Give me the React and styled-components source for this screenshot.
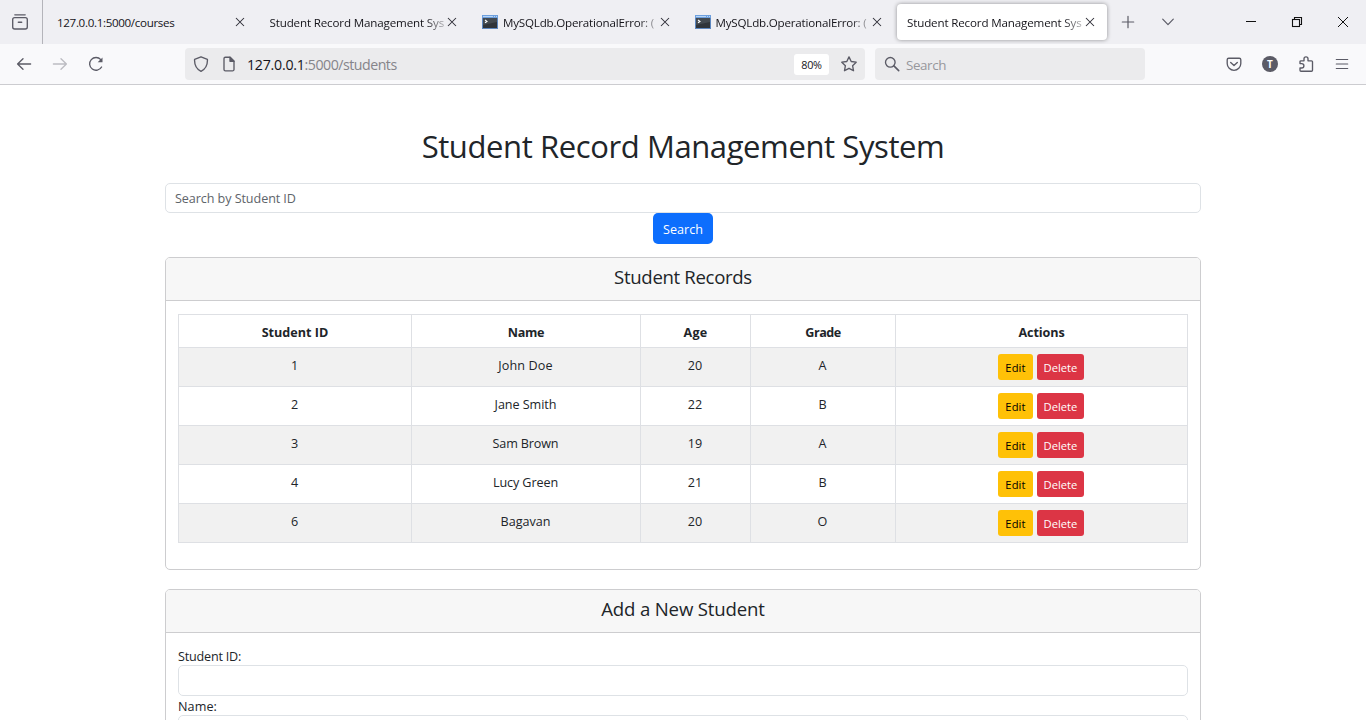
import React from "react";
import styled, { createGlobalStyle } from "styled-components";

const GlobalStyle = createGlobalStyle`
  *, *::before, *::after { box-sizing: border-box; }
  html, body { margin: 0; padding: 0; background: #fff; overflow: hidden; }
  body { font-family: "Open Sans", "Noto Sans", sans-serif; color: #212529; font-size: 12.6px; }
  button, input { font-family: inherit; }
`;

const Window = styled.div`
  width: 1366px;
  height: 720px;
  overflow: hidden;
  display: flex;
  flex-direction: column;
`;

/* ---------- browser chrome ---------- */

const TabStrip = styled.div`
  height: 44px;
  flex: none;
  display: flex;
  align-items: stretch;
  background: #efeff3;
  color: #15141a;
`;

const ViewButton = styled.div`
  width: 43px;
  padding-right: 2px;
  border-right: 1px solid #b4b4ba;
  margin-right: 4px;
  display: flex;
  align-items: center;
  justify-content: center;
`;

const TabList = styled.div`
  display: flex;
  align-items: center;
  gap: 3px;
`;

const TabBox = styled.div`
  width: 209.5px;
  height: 36px;
  padding: 0 12px 0 10px;
  display: flex;
  align-items: center;
  border-radius: 4px;
  background: ${(p) => (p.$active ? "#fff" : "transparent")};
  box-shadow: ${(p) => (p.$active ? "0 0 4px rgba(0,0,0,0.4)" : "none")};
`;

const Favicon = styled.svg`
  flex: none;
  margin-right: 5px;
`;

const TabTitle = styled.span`
  flex: 1;
  min-width: 0;
  padding-top: 1px;
  overflow: hidden;
  white-space: nowrap;
  font-size: 11.6px;
  line-height: 18px;
  letter-spacing: ${(p) => p.$spacing}px;
  ${(p) => p.$fade && "mask-image: linear-gradient(to right, #000 calc(100% - 20px), transparent 104%);"}
`;

const TabClose = styled.svg`
  flex: none;
  margin-left: 2px;
`;

const StripActions = styled.div`
  display: flex;
  align-items: center;
  margin-left: 13px;
  gap: 24px;
`;

const WindowControls = styled.div`
  display: flex;
  align-items: center;
  margin-left: auto;
  padding-right: 15px;
  gap: 30px;
`;

const Toolbar = styled.div`
  height: 41px;
  flex: none;
  display: flex;
  align-items: center;
  background: #f9f9fb;
  border-bottom: 1px solid #ccccd0;
`;

const NavButtons = styled.div`
  width: 185px;
  padding-left: 16px;
  display: flex;
  gap: 20px;
`;

const Field = styled.div`
  width: ${(p) => p.$width}px;
  height: 32px;
  display: flex;
  align-items: center;
  padding: 0 8px;
  margin-right: 10px;
  border-radius: 4px;
  background: #ebebed;
`;

const PageInfo = styled.svg`
  margin-left: 14px;
`;

const UrlText = styled.span`
  margin-left: 12px;
  padding-top: 2px;
  font-size: 14.2px;
  line-height: 20px;
  letter-spacing: -0.5px;
  color: #85848a;
`;

const Host = styled.span`
  color: #15141a;
  letter-spacing: -0.25px;
`;

const Zoom = styled.span`
  width: 35px;
  height: 21px;
  margin-left: auto;
  margin-right: 12px;
  border-radius: 3px;
  background: #fff;
  color: #15141a;
  font-size: 10.8px;
  line-height: 22px;
  letter-spacing: -0.3px;
  text-align: center;
`;

const SearchHint = styled.span`
  margin-left: 5px;
  padding-top: 2px;
  font-size: 13.4px;
  letter-spacing: -0.4px;
  line-height: 20px;
  color: #97979c;
`;

const ToolbarActions = styled.div`
  display: flex;
  margin-left: auto;
  padding-right: 16px;
  gap: 20px;
`;

/* ---------- page ---------- */

const Page = styled.main`
  width: 1036px;
  margin: 0 auto;
  padding-top: 40px;
  flex: none;
  display: flex;
  flex-direction: column;
`;

const Heading = styled.h1`
  margin: 0 0 16px;
  height: 42px;
  font-size: 31px;
  font-weight: 400;
  line-height: 42px;
  letter-spacing: -0.4px;
  text-align: center;
`;

const TextInput = styled.input`
  display: block;
  width: 100%;
  height: ${(p) => p.$height || 31}px;
  padding: 0 9px;
  border: 1px solid #dee2e6;
  border-radius: 5px;
  background: #fff;
  color: #212529;
  font-size: 12.6px;
  letter-spacing: -0.08px;
  outline: none;
  &::placeholder { color: #5e646a; opacity: 1; }
`;

const SearchButton = styled.button`
  align-self: center;
  width: 60px;
  height: 31px;
  padding: 2px 0 0;
  margin-bottom: 13px;
  border: 0;
  border-radius: 5px;
  background: #0d6efd;
  color: #fff;
  font-size: 12.6px;
  line-height: 19px;
`;

const Card = styled.section`
  border: 1px solid #cdcdcf;
  border-radius: 5px;
  margin-bottom: 19px;
  overflow: hidden;
`;

const CardHeader = styled.header`
  height: 43px;
  padding-top: 7px;
  border-bottom: 1px solid #cdcdcf;
  background: #f7f7f7;
`;

const CardTitle = styled.h2`
  margin: 0;
  font-size: 18.6px;
  font-weight: 400;
  line-height: 24px;
  letter-spacing: ${(p) => p.$spacing}px;
  text-align: center;
`;

const CardBody = styled.div`
  padding: ${(p) => p.$pad};
`;

const Table = styled.table`
  width: 1010px;
  table-layout: fixed;
  border-collapse: separate;
  border-spacing: 0;
  border: 0 solid #dee0e4;
  border-width: 1px 0 0 1px;
  text-align: center;
  line-height: 19px;
`;

const HeadCell = styled.th`
  width: ${(p) => p.$width}px;
  height: 33px;
  padding: 8px 0 0;
  vertical-align: top;
  font-weight: 700;
  letter-spacing: ${(p) => p.$spacing}px;
  border: 0 solid #dee0e4;
  border-width: 0 1px 1px 0;
`;

const Row = styled.tr`
  background: ${(p) => (p.$striped ? "#f1f1f1" : "#fff")};
`;

const Cell = styled.td`
  height: 39px;
  padding: 8px 1px 0 0;
  vertical-align: top;
  letter-spacing: ${(p) => p.$spacing || 0}px;
  border: 0 solid #dee0e4;
  border-width: 0 1px 1px 0;
`;

const ActionCell = styled(Cell)`
  padding-top: 6px;
`;

const Actions = styled.div`
  display: flex;
  justify-content: center;
  gap: 4px;
`;

const ActionButton = styled.button`
  width: ${(p) => (p.$danger ? 47 : 35)}px;
  height: 26px;
  padding: 1px 0 0;
  border: 0;
  border-radius: 3px;
  background: ${(p) => (p.$danger ? "#dc3545" : "#ffc107")};
  color: ${(p) => (p.$danger ? "#fff" : "#000")};
  font-size: 11.2px;
  line-height: 16px;
  letter-spacing: ${(p) => (p.$danger ? 0 : 0.1)}px;
`;

const Label = styled.label`
  display: block;
  height: ${(p) => p.$height}px;
  line-height: ${(p) => p.$line}px;
  letter-spacing: ${(p) => p.$spacing}px;
`;

/* ---------- icons ---------- */

const icon = {
  width: 16,
  height: 16,
  viewBox: "0 0 16 16",
  fill: "none",
  stroke: "#5b5b66",
  strokeWidth: 1.35,
  strokeLinecap: "round",
  strokeLinejoin: "round",
};

const TerminalIcon = () => (
  <Favicon width="16" height="14" viewBox="0 0 16 14">
    <rect width="16" height="14" fill="#5d87bf" />
    <rect x="0" y="0" width="16" height="3" fill="#6d9fdd" />
    <path d="M1 1.5h10M12 1.5h1M14 1.5h1" stroke="#b9d6f6" strokeWidth="1" />
    <rect x="1" y="3" width="14" height="10" fill="#30353a" />
    <path d="M1 3h14v4L1 10z" fill="#434a50" />
    <path d="M3 5l2 1.4L3 7.8" fill="none" stroke="#fff" strokeWidth="1.1" />
  </Favicon>
);

const CloseIcon = () => (
  <TabClose width="10" height="10" viewBox="0 0 10 10" fill="none" stroke="#2b2a33" strokeWidth="1.05">
    <path d="M1 1l8 8M9 1l-8 8" />
  </TabClose>
);

const TABS = [
  { title: "127.0.0.1:5000/courses", spacing: -0.33 },
  { title: "Student Record Management Sys", spacing: -0.15, fade: true },
  { title: "MySQLdb.OperationalError: (", spacing: -0.2, fade: true, terminal: true },
  { title: "MySQLdb.OperationalError: (", spacing: -0.2, fade: true, terminal: true },
  { title: "Student Record Management Sys", spacing: -0.15, fade: true, active: true },
];

const COLUMNS = [
  { label: "Student ID", width: 233, spacing: 0 },
  { label: "Name", width: 229, spacing: -0.3 },
  { label: "Age", width: 110, spacing: 0.2 },
  { label: "Grade", width: 145, spacing: -0.5 },
  { label: "Actions", width: 292, spacing: -0.1 },
];

const STUDENTS = [
  { id: 1, name: "John Doe", age: 20, grade: "A", spacing: 0.1 },
  { id: 2, name: "Jane Smith", age: 22, grade: "B", spacing: -0.05 },
  { id: 3, name: "Sam Brown", age: 19, grade: "A", spacing: -0.15 },
  { id: 4, name: "Lucy Green", age: 21, grade: "B", spacing: -0.1 },
  { id: 6, name: "Bagavan", age: 20, grade: "O", spacing: 0 },
];

function Tabs() {
  return (
    <TabStrip>
      <ViewButton>
        <svg {...icon}>
          <path d="M2.8 .8h10.4" />
          <rect x=".7" y="3.6" width="14.6" height="11.4" rx="2" />
          <path d="M6.3 8.2h3.4" />
        </svg>
      </ViewButton>
      <TabList>
        {TABS.map((t, i) => (
          <TabBox key={i} $active={t.active}>
            {t.terminal && <TerminalIcon />}
            <TabTitle $spacing={t.spacing} $fade={t.fade}>{t.title}</TabTitle>
            <CloseIcon />
          </TabBox>
        ))}
      </TabList>
      <StripActions>
        <svg {...icon} strokeWidth="1.2"><path d="M8 2.3v11.4M2.3 8h11.4" /></svg>
        <svg {...icon} strokeWidth="1.2"><path d="M2.7 5.2L8 10.6l5.3-5.4" /></svg>
      </StripActions>
      <WindowControls>
        <svg width="16" height="16" viewBox="0 0 16 16" stroke="#111"><path d="M3 7.5h10" /></svg>
        <svg width="16" height="16" viewBox="0 0 16 16" fill="none" stroke="#111" strokeWidth="1.1">
          <rect x="3.5" y="5.5" width="7" height="7" />
          <path d="M5.500 5.500v-2h7v7h-2" />
        </svg>
        <svg width="16" height="16" viewBox="0 0 16 16" stroke="#111"><path d="M3 3l10 10M13 3L3 13" /></svg>
      </WindowControls>
    </TabStrip>
  );
}

function NavBar() {
  return (
    <Toolbar>
      <NavButtons>
        <svg {...icon}><path d="M14.6 8H1.6M7 2.7L1.6 8 7 13.3" /></svg>
        <svg {...icon} stroke="#bcbcc2"><path d="M1.4 8h13M9 2.7L14.4 8 9 13.3" /></svg>
        <svg {...icon}>
          <path d="M13.6 11A6.4 6.4 0 1 1 12.8 3.6" />
          <path d="M14.5 1.4v4.8H9.7z" fill="#5b5b66" stroke="none" />
        </svg>
      </NavButtons>
      <Field $width={680}>
        <svg {...icon}><path d="M8 .8l6.4 2.5c.3 5-1.8 9.6-6.4 12C3.4 12.9 1.3 8.3 1.6 3.3z" /></svg>
        <PageInfo {...icon} width="12" viewBox="0 0 12 16">
          <path d="M1 2.6A1.4 1.4 0 0 1 2.400 1.200H7l4 4v8.200a1.400 1.400 0 0 1-1.400 1.400H2.400A1.400 1.400 0 0 1 1 13.400z" />
          <path d="M7 1.2v4h4z" fill="#5b5b66" />
        </PageInfo>
        <UrlText><Host>127.0.0.1</Host>:5000/students</UrlText>
        <Zoom>80%</Zoom>
        <svg {...icon}>
          <path d="M8 .9l2.2 4.600 5 .7-3.600 3.500.9 5L8 12.300l-4.500 2.400.9-5L.8 6.200l5-.7z" />
        </svg>
      </Field>
      <Field $width={270}>
        <svg {...icon} width="18"><circle cx="6.3" cy="6.3" r="4.8" /><path d="M9.9 9.9l4.800 4.700" strokeWidth="1.6" /></svg>
        <SearchHint>Search</SearchHint>
      </Field>
      <ToolbarActions>
        <svg {...icon}>
          <path d="M2.7 2.200h10.600a1.500 1.500 0 0 1 1.500 1.500V7.500a6.800 6.800 0 0 1-13.600 0V3.700a1.500 1.500 0 0 1 1.500-1.500z" />
          <path d="M4.7 6.400L8 9.500l3.300-3.100" />
        </svg>
        <svg width="16" height="16" viewBox="0 0 16 16">
          <circle cx="8" cy="8" r="8" fill="#5b5b66" />
          <text x="8" y="11.7" fontSize="10" fontWeight="700" fill="#fff" textAnchor="middle">T</text>
        </svg>
        <svg {...icon}>
          <path d="M2 7.600V5.800a1 1 0 0 1 1-1H6V2.800a2 2 0 0 1 4 0v2h3.500a1 1 0 0 1 1 1v8.400a1 1 0 0 1-1 1H3a1 1 0 0 1-1-1V12h1.700a2 2 0 0 0 0-4.400z" />
        </svg>
        <svg {...icon} strokeWidth="1.2"><path d="M2.300 3.500h11.400M2.300 8h11.400M2.300 12.500h11.400" /></svg>
      </ToolbarActions>
    </Toolbar>
  );
}

export default function App() {
  return (
    <Window>
      <GlobalStyle />
      <Tabs />
      <NavBar />
      <Page>
        <Heading>Student Record Management System</Heading>
        <TextInput $height={30} placeholder="Search by Student ID" />
        <SearchButton>Search</SearchButton>
        <Card>
          <CardHeader><CardTitle $spacing={-0.33}>Student Records</CardTitle></CardHeader>
          <CardBody $pad="13px 12px 26px">
            <Table>
              <thead>
                <tr>
                  {COLUMNS.map((c) => (
                    <HeadCell key={c.label} $width={c.width} $spacing={c.spacing}>{c.label}</HeadCell>
                  ))}
                </tr>
              </thead>
              <tbody>
                {STUDENTS.map((s, i) => (
                  <Row key={s.id} $striped={i % 2 === 0}>
                    <Cell>{s.id}</Cell>
                    <Cell $spacing={s.spacing}>{s.name}</Cell>
                    <Cell>{s.age}</Cell>
                    <Cell>{s.grade}</Cell>
                    <ActionCell>
                      <Actions>
                        <ActionButton>Edit</ActionButton>
                        <ActionButton $danger>Delete</ActionButton>
                      </Actions>
                    </ActionCell>
                  </Row>
                ))}
              </tbody>
            </Table>
          </CardBody>
        </Card>
        <Card>
          <CardHeader><CardTitle $spacing={-0.15}>Add a New Student</CardTitle></CardHeader>
          <CardBody $pad="14px 12px">
            <Label $height={18} $line={19} $spacing={-0.2}>Student ID:</Label>
            <TextInput />
            <Label $height={19} $line={21} $spacing={0.1}>Name:</Label>
            <TextInput />
          </CardBody>
        </Card>
      </Page>
    </Window>
  );
}
